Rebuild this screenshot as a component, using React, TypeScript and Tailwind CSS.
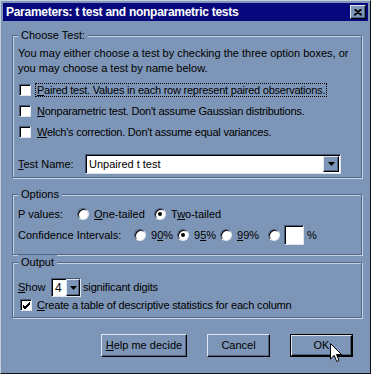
import type { ReactNode } from 'react'

// Win95-style "Parameters" dialog
const BG = 'bg-[#7d95b6]'

function Check({ checked = false }: { checked?: boolean }) {
  return (
    <span className="relative inline-block w-[12px] h-[12px] shrink-0 bg-white border border-t-[#46597a] border-l-[#46597a] border-r-[#dfe6ef] border-b-[#dfe6ef] shadow-[inset_1px_1px_0_#000]">
      {checked && (
        <svg className="absolute left-[1px] top-[1px]" width="9" height="9" viewBox="0 0 9 9">
          <path d="M1 4 L3 6 L8 1 M1 5 L3 7 L8 2 M1 6 L3 8 L8 3" stroke="#000" strokeWidth="1" fill="none" />
        </svg>
      )}
    </span>
  )
}

function Radio({ checked = false }: { checked?: boolean }) {
  return (
    <span className="relative inline-flex items-center justify-center w-[12px] h-[12px] shrink-0 rounded-full bg-white border border-t-[#46597a] border-l-[#46597a] border-r-[#dfe6ef] border-b-[#dfe6ef] shadow-[inset_1px_1px_0_#000]">
      {checked && <span className="w-[4px] h-[4px] rounded-full bg-black" />}
    </span>
  )
}

function Group({ label, className, children }: { label: string; className: string; children: ReactNode }) {
  return (
    <div className={`relative w-[350px] border border-[#50698a] shadow-[inset_1px_1px_0_#c8d3e2,1px_1px_0_#c8d3e2] pl-[5px] ${className}`}>
      <span className={`absolute left-[5px] -top-[8px] px-[3px] leading-[14px] ${BG}`}>{label}</span>
      {children}
    </div>
  )
}

function Button({ children, isDefault = false, width }: { children: ReactNode; isDefault?: boolean; width: string }) {
  return (
    <div className={`${width} h-[23px] ${isDefault ? 'border border-black' : ''}`}>
      <div className="w-full h-full flex items-center justify-center border border-t-[#dfe6ef] border-l-[#dfe6ef] border-r-black border-b-black shadow-[inset_-1px_-1px_0_#4f6480]">
        {children}
      </div>
    </div>
  )
}

function DownArrow() {
  return (
    <svg width="7" height="4" viewBox="0 0 7 4">
      <path d="M0 0 H7 L3.5 4 Z" fill="#000" />
    </svg>
  )
}

export default function App() {
  return (
    <div className={`w-[371px] h-[374px] ${BG} border border-t-[#c3cddc] border-l-[#c3cddc] border-r-[#111] border-b-[#111] p-[2px] text-black text-[11px] font-['Liberation_Sans',Arial,sans-serif] relative overflow-hidden`}>
      {/* title bar */}
      <div className="h-[18px] bg-[#08087e] flex items-center justify-between">
        <span className="pl-[3px] text-white font-bold text-[12px] tracking-[-0.28px] leading-[18px]">
          Parameters: t test and nonparametric tests
        </span>
        <div className={`mr-[2px] w-[16px] h-[14px] ${BG} flex items-center justify-center border border-t-[#dfe6ef] border-l-[#dfe6ef] border-r-black border-b-black shadow-[inset_-1px_-1px_0_#4f6480]`}>
          <svg width="8" height="7" viewBox="0 0 8 7">
            <path d="M0.5 0.5 L7.5 6.5 M1.5 0.5 L8 6 M7.5 0.5 L0.5 6.5 M6.5 0.5 L0 6" stroke="#000" strokeWidth="1.2" fill="none" />
          </svg>
        </div>
      </div>

      <div className="ml-[9px]">
        {/* Choose Test */}
        <Group label="Choose Test:" className="mt-[14px] pt-[10px] pb-[3px]">
          <p className="leading-[15px]">
            You may either choose a test by checking the three option boxes, or
            <br />
            you may choose a test by name below.
          </p>
          <div className="mt-[3px] tracking-[-0.23px]">
            <div className="h-[21px] flex items-center pl-[1px]">
              <Check />
              <span className="ml-[4px] px-[1px] leading-[12px] border border-dotted border-black">
                <u>P</u>aired test. Values in each row represent paired observations.
              </span>
            </div>
            <div className="h-[21px] flex items-center pl-[1px]">
              <Check />
              <span className="ml-[4px] px-[1px] leading-[12px] border border-transparent">
                <u>N</u>onparametric test. Don't assume Gaussian distributions.
              </span>
            </div>
            <div className="h-[21px] flex items-center pl-[1px]">
              <Check />
              <span className="ml-[4px] px-[1px] leading-[12px] border border-transparent">
                <u>W</u>elch's correction. Don't assume equal variances.
              </span>
            </div>
          </div>
          <div className="mt-[12px] h-[20px] flex items-center">
            <span className="w-[67px]">
              <u>T</u>est Name:
            </span>
            <div className="w-[256px] h-[20px] bg-white flex items-center justify-between border border-t-[#46597a] border-l-[#46597a] border-r-[#dfe6ef] border-b-[#dfe6ef] shadow-[inset_1px_1px_0_#000]">
              <span className="pl-[3px]">Unpaired t test</span>
              <div className={`mr-[1px] w-[16px] h-[16px] ${BG} flex items-center justify-center border border-t-[#dfe6ef] border-l-[#dfe6ef] border-r-black border-b-black shadow-[inset_-1px_-1px_0_#4f6480]`}>
                <DownArrow />
              </div>
            </div>
          </div>
        </Group>

        {/* Options */}
        <Group label="Options" className="mt-[16px] pt-[10px] pb-[9px]">
          <div className="h-[18px] flex items-center">
            <span className="w-[59px]">P values:</span>
            <div className="w-[77px] flex items-center">
              <Radio />
              <span className="ml-[5px]">
                <u>O</u>ne-tailed
              </span>
            </div>
            <div className="flex items-center">
              <Radio checked />
              <span className="ml-[5px]">
                T<u>w</u>o-tailed
              </span>
            </div>
          </div>
          <div className="mt-[2px] h-[20px] flex items-center">
            <span className="w-[116px]">Confidence Intervals:</span>
            <div className="w-[43px] flex items-center">
              <Radio />
              <span className="ml-[5px]">
                9<u>0</u>%
              </span>
            </div>
            <div className="w-[43px] flex items-center">
              <Radio checked />
              <span className="ml-[5px]">
                9<u>5</u>%
              </span>
            </div>
            <div className="w-[48px] flex items-center">
              <Radio />
              <span className="ml-[5px]">
                <u>9</u>9%
              </span>
            </div>
            <div className="flex items-center">
              <Radio />
              <span className="ml-[4px] w-[20px] h-[20px] bg-white border border-t-[#46597a] border-l-[#46597a] border-r-[#dfe6ef] border-b-[#dfe6ef] shadow-[inset_1px_1px_0_#000]" />
              <span className="ml-[3px]">%</span>
            </div>
          </div>
        </Group>

        {/* Output */}
        <Group label="Output" className="mt-[7px] pt-[15px] pb-[4px]">
          <div className="h-[19px] flex items-center">
            <span className="w-[33px]">
              <u>S</u>how
            </span>
            <div className="w-[30px] h-[19px] bg-white flex items-center justify-between border border-t-[#46597a] border-l-[#46597a] border-r-[#dfe6ef] border-b-[#dfe6ef] shadow-[inset_1px_1px_0_#000]">
              <span className="pl-[3px] text-[12px]">4</span>
              <div className={`w-[14px] h-[17px] ${BG} flex items-center justify-center border border-t-[#dfe6ef] border-l-[#dfe6ef] border-r-black border-b-black shadow-[inset_-1px_-1px_0_#4f6480]`}>
                <DownArrow />
              </div>
            </div>
            <span className="ml-[2px] tracking-[-0.15px]">significant digits</span>
          </div>
          <div className="h-[16px] flex items-center pl-[2px]">
            <Check checked />
            <span className="ml-[3px] px-[1px] border border-transparent leading-[12px] tracking-[-0.16px]">
              <u>C</u>reate a table of descriptive statistics for each column
            </span>
          </div>
        </Group>
      </div>

      {/* buttons */}
      <div className="mt-[16px] pl-[98px] flex gap-[20px]">
        <Button width="w-[86px]">
          <span>
            <u>H</u>elp me decide
          </span>
        </Button>
        <Button width="w-[63px]">Cancel</Button>
        <Button width="w-[63px]" isDefault>
          OK
        </Button>
      </div>

      {/* mouse pointer over OK */}
      <svg className="absolute left-[329px] top-[342px]" width="12" height="20" viewBox="0 0 12 20">
        <path d="M0.5 0.5 V16 L4.2 12.4 L6.8 18.5 L9 17.5 L6.5 11.5 H11.5 Z" fill="#fff" stroke="#000" strokeWidth="1" />
      </svg>
    </div>
  )
}
